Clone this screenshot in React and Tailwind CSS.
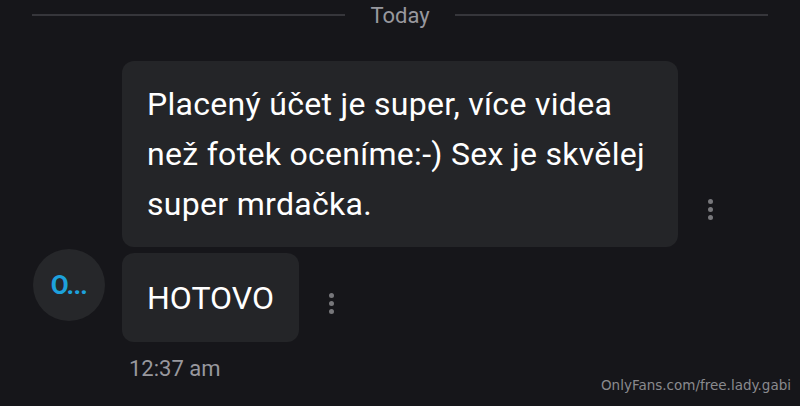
import React from "react";

const font = { fontFamily: "Roboto, 'Noto Sans', sans-serif" };

// vertical "more" dots next to each bubble
const MoreDots = ({ className = "" }) => (
  <div className={`flex flex-col gap-[3px] ${className}`}>
    <span className="w-[5px] h-[5px] rounded-full bg-[#77777b]" />
    <span className="w-[5px] h-[5px] rounded-full bg-[#77777b]" />
    <span className="w-[5px] h-[5px] rounded-full bg-[#77777b]" />
  </div>
);

const lines = [
  "Placený účet je super, více videa",
  "než fotek oceníme:-) Sex je skvělej",
  "super mrdačka.",
];

const App = () => {
  return (
    <div
      className="relative w-[800px] h-[406px] bg-[#16161a] overflow-hidden"
      style={font}
    >
      {/* Day divider */}
      <div className="flex items-center h-[30px] px-[32px]">
        <div className="flex-1 h-[2px] bg-[#36363b]" />
        <span className="px-[25px] text-[22px] text-[#98989e]">Today</span>
        <div className="flex-1 h-[2px] bg-[#36363b]" />
      </div>

      {/* Message group */}
      <div className="flex pl-[33px] pt-[31px]">
        <div className="w-[72px] flex flex-col justify-end pb-[64px]">
          <div className="w-[72px] h-[72px] rounded-full bg-[#26272a] flex items-center justify-center">
            <span className="text-[26px] font-bold text-[#1da1dc] tracking-tight">
              O...
            </span>
          </div>
        </div>

        <div className="ml-[17px] flex flex-col">
          <div className="flex items-end">
            <div className="w-[556px] rounded-[12px] bg-[#242528] pl-[25px] pr-[10px] py-[18px] text-[32px] leading-[50px] tracking-[0.3px] text-white">
              {lines.map((l) => (
                <div key={l} className="whitespace-nowrap">{l}</div>
              ))}
            </div>
            <MoreDots className="ml-[30px] mb-[27px]" />
          </div>

          <div className="flex items-end mt-[6px]">
            <div className="h-[89px] rounded-[12px] bg-[#242528] px-[25px] flex items-center text-[32px] text-white">
              HOTOVO
            </div>
            <MoreDots className="ml-[30px] mb-[28px]" />
          </div>

          <div className="ml-[7px] mt-[10px] text-[22px] text-[#98989e]">12:37 am</div>
        </div>
      </div>

      {/* watermark */}
      <div
        className="absolute right-[9px] bottom-[11px] text-[13.5px] text-[#8a8a8e]"
        style={{ fontFamily: "'DejaVu Sans', sans-serif" }}
      >
        OnlyFans.com/free.lady.gabi
      </div>
    </div>
  );
};

export default App;
